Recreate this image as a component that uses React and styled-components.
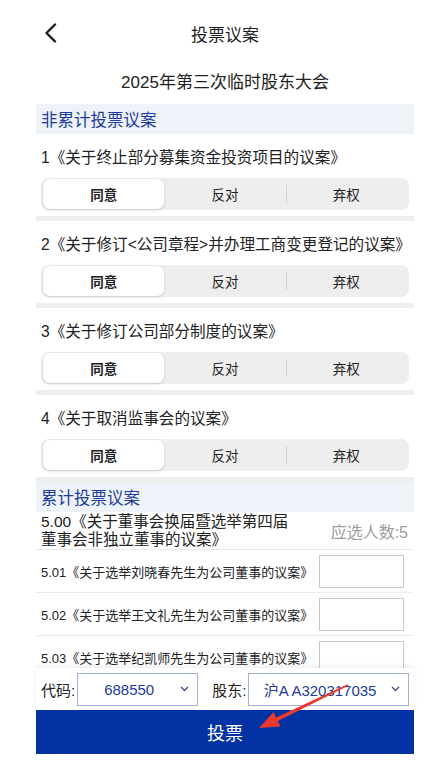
import React from "react";
import styled, { createGlobalStyle } from "styled-components";

const GlobalStyle = createGlobalStyle`
  html, body { margin: 0; padding: 0; background: #fff; }
  body { font-family: "Liberation Sans", "Noto Sans CJK SC", sans-serif; color: #222; }
  * { box-sizing: border-box; }
`;

const Root = styled.div`
  position: relative;
  width: 430px;
  height: 764px;
  overflow: hidden;
  background: #fff;
`;

const Page = styled.div`
  margin-left: 36px;
  width: 378px;
  height: 764px;
  display: flex;
  flex-direction: column;
`;

const NavBar = styled.div`
  margin-top: 10px;
  height: 46px;
  display: grid;
  grid-template-columns: 40px 1fr 40px;
  align-items: center;
  flex-shrink: 0;
`;

const BackButton = styled.div`
  padding-left: 8px;
  display: flex;
  align-items: center;
`;

const NavTitle = styled.div`
  text-align: center;
  font-size: 17px;
  color: #222;
`;

const MeetingTitle = styled.div`
  height: 48px;
  display: flex;
  align-items: center;
  justify-content: center;
  font-size: 17px;
  color: #222;
  flex-shrink: 0;
`;

const Content = styled.div`
  flex: 1;
  min-height: 0;
  overflow: hidden;
`;

const SectionHeader = styled.div`
  height: 30px;
  padding-left: 5px;
  display: flex;
  align-items: center;
  background: #eef2f9;
  color: #1d3b9c;
  font-size: 16.5px;
`;

const ProposalBlock = styled.div`
  padding: 0 5px 6px;
  border-bottom: 5px solid #eeeeee;
`;

const ProposalTitle = styled.div`
  height: 44px;
  display: flex;
  align-items: center;
  font-size: 15.6px;
  white-space: nowrap;
  color: #222;
`;

const Segmented = styled.div`
  display: grid;
  grid-template-columns: repeat(3, 1fr);
  height: 32px;
  padding: 1px 2px;
  background: #eeeeef;
  border-radius: 8px;
`;

const Segment = styled.div`
  position: relative;
  display: flex;
  align-items: center;
  justify-content: center;
  font-size: 13.5px;
  color: #222;
  border-radius: 7px;
  font-weight: ${(p) => (p.$active ? 600 : 400)};
  background: ${(p) => (p.$active ? "#fff" : "transparent")};
  box-shadow: ${(p) => (p.$active ? "0 1px 3px rgba(0,0,0,0.18)" : "none")};

  &::before {
    content: "";
    display: ${(p) => (p.$divider ? "block" : "none")};
    position: absolute;
    left: 0;
    top: 6px;
    bottom: 6px;
    width: 1px;
    background: #d2d2d4;
  }
`;

const QuotaRow = styled.div`
  min-height: 38px;
  display: flex;
  align-items: center;
  justify-content: space-between;
  padding: 0 6px 0 5px;
  border-bottom: 1px solid #e8e8e8;
`;

const QuotaTitle = styled.div`
  width: 252px;
  font-size: 15.5px;
  line-height: 18px;
  color: #222;
`;

const QuotaCount = styled.div`
  font-size: 16px;
  color: #9c9c9c;
`;

const CandidateRow = styled.div`
  height: 43px;
  display: flex;
  align-items: center;
  justify-content: space-between;
  padding: 0 10px 0 5px;
  border-bottom: 1px solid #ebebeb;
`;

const CandidateName = styled.div`
  font-size: 13px;
  color: #222;
  white-space: nowrap;
`;

const VoteInput = styled.input`
  width: 85px;
  height: 33px;
  border: 1px solid #c8c8c8;
  border-radius: 0;
  background: #fff;
  outline: none;
  padding: 0 4px;
`;

const BottomBar = styled.div`
  position: relative;
  z-index: 1;
  height: 42px;
  display: flex;
  align-items: center;
  padding: 0 5px;
  background: #fff;
  box-shadow: 0 -2px 4px rgba(0, 0, 0, 0.07);
  flex-shrink: 0;
`;

const FieldLabel = styled.span`
  font-size: 15px;
  color: #222;
  margin-left: ${(p) => p.$gap || 0}px;
  margin-right: 2px;
  white-space: nowrap;
`;

const SelectBox = styled.div`
  height: 33px;
  width: ${(p) => (p.$width ? `${p.$width}px` : "auto")};
  flex: ${(p) => (p.$width ? "0 0 auto" : "1")};
  display: flex;
  align-items: center;
  border: 1px solid #a3b2d0;
  background: #fff;
  padding-right: 8px;
`;

const SelectValue = styled.span`
  flex: 1;
  text-align: center;
  font-size: 15px;
  color: #1d3b9c;
  white-space: nowrap;
`;

const VoteButton = styled.button`
  flex-shrink: 0;
  height: 44px;
  margin-bottom: 10px;
  width: 100%;
  border: none;
  background: #0332a4;
  color: #fff;
  font-size: 18px;
  font-family: inherit;
`;

const Overlay = styled.svg`
  position: absolute;
  left: 0;
  top: 0;
  z-index: 5;
  pointer-events: none;
`;

const Chevron = () => (
  <svg width="9" height="6" viewBox="0 0 9 6">
    <polyline points="1,1 4.5,4.5 8,1" fill="none" stroke="#3a4c8c" strokeWidth="1.3" />
  </svg>
);

const proposals = [
  "1《关于终止部分募集资金投资项目的议案》",
  "2《关于修订<公司章程>并办理工商变更登记的议案》",
  "3《关于修订公司部分制度的议案》",
  "4《关于取消监事会的议案》",
];

const candidates = [
  "5.01《关于选举刘晓春先生为公司董事的议案》",
  "5.02《关于选举王文礼先生为公司董事的议案》",
  "5.03《关于选举纪凯师先生为公司董事的议案》",
];

export default function App() {
  return (
    <Root>
      <GlobalStyle />
      <Page>
        <NavBar>
          <BackButton>
            <svg width="14" height="20" viewBox="0 0 14 20">
              <polyline points="11,1.5 2.5,10 11,18.5" fill="none" stroke="#1b1b28" strokeWidth="2.4" strokeLinecap="round" strokeLinejoin="round" />
            </svg>
          </BackButton>
          <NavTitle>投票议案</NavTitle>
          <div />
        </NavBar>
        <MeetingTitle>2025年第三次临时股东大会</MeetingTitle>
        <Content>
          <SectionHeader>非累计投票议案</SectionHeader>
          {proposals.map((p) => (
            <ProposalBlock key={p}>
              <ProposalTitle>{p}</ProposalTitle>
              <Segmented>
                <Segment $active>同意</Segment>
                <Segment>反对</Segment>
                <Segment $divider>弃权</Segment>
              </Segmented>
            </ProposalBlock>
          ))}
          <SectionHeader>累计投票议案</SectionHeader>
          <QuotaRow>
            <QuotaTitle>5.00《关于董事会换届暨选举第四届董事会非独立董事的议案》</QuotaTitle>
            <QuotaCount>应选人数:5</QuotaCount>
          </QuotaRow>
          {candidates.map((c) => (
            <CandidateRow key={c}>
              <CandidateName>{c}</CandidateName>
              <VoteInput />
            </CandidateRow>
          ))}
        </Content>
        <BottomBar>
          <FieldLabel>代码:</FieldLabel>
          <SelectBox $width={121}>
            <SelectValue>688550</SelectValue>
            <Chevron />
          </SelectBox>
          <FieldLabel $gap={14}>股东:</FieldLabel>
          <SelectBox>
            <SelectValue>沪A A320317035</SelectValue>
            <Chevron />
          </SelectBox>
        </BottomBar>
        <VoteButton>投票</VoteButton>
      </Page>
      <Overlay width="430" height="764" viewBox="0 0 430 764">
        <polygon
          points="348.4,685.7 277.9,721.1 280.5,726.5 259,728 273.5,712.1 276.1,717.5 347.6,684.3"
          fill="#ea3a2f"
        />
      </Overlay>
    </Root>
  );
}
